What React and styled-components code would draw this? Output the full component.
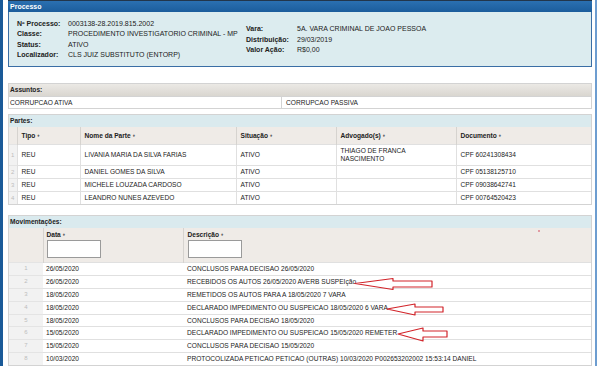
import React from "react";
import styled, { createGlobalStyle } from "styled-components";

const GlobalStyle = createGlobalStyle`
  html, body {
    margin: 0;
    padding: 0;
    background: #fff;
  }
  body {
    font-family: "Liberation Sans", Arial, sans-serif;
    font-size: 6.6px;
    color: #222;
  }
`;

const partes = [
  ["REU", "LIVANIA MARIA DA SILVA FARIAS", "ATIVO", "THIAGO DE FRANCA NASCIMENTO", "CPF 60241308434"],
  ["REU", "DANIEL GOMES DA SILVA", "ATIVO", "", "CPF 05138125710"],
  ["REU", "MICHELE LOUZADA CARDOSO", "ATIVO", "", "CPF 09038642741"],
  ["REU", "LEANDRO NUNES AZEVEDO", "ATIVO", "", "CPF 00764520423"],
];

const movimentacoes = [
  ["26/05/2020", "CONCLUSOS PARA DECISAO 26/05/2020"],
  ["26/05/2020", "RECEBIDOS OS AUTOS 26/05/2020 AVERB SUSPEIção"],
  ["18/05/2020", "REMETIDOS OS AUTOS PARA A 18/05/2020 7 VARA"],
  ["18/05/2020", "DECLARADO IMPEDIMENTO OU SUSPEICAO 18/05/2020 6 VARA"],
  ["18/05/2020", "CONCLUSOS PARA DECISAO 18/05/2020"],
  ["15/05/2020", "DECLARADO IMPEDIMENTO OU SUSPEICAO 15/05/2020 REMETER"],
  ["15/05/2020", "CONCLUSOS PARA DECISAO 15/05/2020"],
  ["10/03/2020", "PROTOCOLIZADA PETICAO PETICAO (OUTRAS) 10/03/2020 P002653202002 15:53:14 DANIEL"],
];

// annotation arrows drawn over the list (page coordinates)
const arrows = [
  "355,283.5 393,278.5 393,281 432,281 432,287 393,287 393,289.5",
  "387,309 415,304 415,307 443,307 443,312 415,312 415,315",
  "398,334 423,328 423,331 447,331 447,337 423,337 423,341",
];

const Page = styled.div`
  position: relative;
  width: 600px;
  height: 366px;
  overflow: hidden;
  display: flex;
  align-items: stretch;
`;

const LeftBar = styled.div`
  flex: none;
  width: 3px;
  background: #1a5a98;
`;

const RightBar = styled.div`
  flex: none;
  width: 2px;
  margin-left: 3px;
  background: #6d9dd0;
`;

const Main = styled.div`
  flex: none;
  width: 584px;
  margin-left: 5px;
  display: flex;
  flex-direction: column;
`;

const ProcTitle = styled.div`
  height: 11px;
  line-height: 11px;
  border-top: 1px solid #22364b;
  background: linear-gradient(#2b70b1, #1b5d9c);
  color: #fff;
  font-weight: bold;
  font-size: 7px;
  padding-left: 2px;
`;

const ProcBody = styled.div`
  height: 59px;
  border: 1px solid #3a6ea5;
  border-top: none;
  background: #dcecef;
  display: flex;
  align-items: center;
  font-size: 7px;
`;

const InfoGrid = styled.div`
  display: grid;
  grid-template-columns: 51px auto;
  grid-auto-rows: ${(p) => p.$row}px;
  align-items: center;
  padding-left: ${(p) => p.$pad}px;
  width: ${(p) => (p.$width ? p.$width + "px" : "auto")};
  box-sizing: border-box;
  white-space: nowrap;
`;

const Label = styled.span`
  font-weight: bold;
`;

const Section = styled.div`
  margin-top: ${(p) => p.$top}px;
  border: 1px solid #d3d3d3;
`;

const SectionTitle = styled.div`
  height: 12px;
  line-height: 12px;
  padding-left: 1px;
  font-weight: bold;
  background: ${(p) =>
    p.$gray ? "linear-gradient(#ebe9e5, #d9d6d0)" : "#daeaee"};
`;

const AssuntoRow = styled.div`
  display: grid;
  grid-template-columns: 272px 1fr;
  height: 11px;
  line-height: 11px;
  border-top: 1px solid #d3d3d3;
`;

const AssuntoCell = styled.div`
  padding-left: ${(p) => (p.$first ? 1 : 4)}px;
  border-left: ${(p) => (p.$first ? "none" : "1px solid #d3d3d3")};
`;

const Table = styled.table`
  width: 100%;
  border-collapse: collapse;
  table-layout: fixed;
`;

const Th = styled.th`
  text-align: left;
  font-weight: bold;
  background: #efebe7;
  border-left: 1px solid #d6d3cf;
  padding: 0 ${(p) => p.$px || 4}px;
  line-height: 17px;
  vertical-align: top;
  white-space: nowrap;
  &:first-child {
    border-left: none;
  }
`;

const FilterHead = styled.div`
  height: 34px;
  box-sizing: border-box;
  padding-top: 3px;
  line-height: 8px;
`;

const Sort = styled.span`
  font-size: 4.5px;
  line-height: 0;
  color: #666;
  margin-left: 2px;
  vertical-align: 1px;
`;

const Td = styled.td`
  padding: 0 ${(p) => p.$px || 4}px;
  line-height: ${(p) => p.$lh}px;
  border-top: 1px solid #e0e0e0;
  border-left: ${(p) => (p.$noDivider ? "none" : "1px solid #e0e0e0")};
  vertical-align: middle;
  white-space: nowrap;
  overflow: hidden;
`;

const Wrapped = styled.div`
  width: 86px;
  padding: 2px 0;
  line-height: 8px;
  white-space: normal;
`;

const NumTd = styled.td`
  background: #f2f2f2;
  color: #bdbdbd;
  text-align: center;
  border-top: 1px solid #e4e4e4;
  padding: 0;
  font-size: 6px;
  line-height: ${(p) => p.$lh}px;
`;

const FilterBox = styled.div`
  width: 54px;
  height: 18px;
  margin-top: 1px;
  box-sizing: border-box;
  border: 1px solid #9a9a9a;
  background: #fff;
`;

const Overlay = styled.svg`
  position: absolute;
  left: 0;
  top: 0;
  pointer-events: none;
`;

export default function App() {
  return (
    <>
      <GlobalStyle />
      <Page>
        <LeftBar />
        <Main>
          <ProcTitle>Processo</ProcTitle>
          <ProcBody>
            <InfoGrid $row={10.3} $pad={8} $width={237}>
              <Label>Nº Processo:</Label>
              <span>0003138-28.2019.815.2002</span>
              <Label>Classe:</Label>
              <span>PROCEDIMENTO INVESTIGATORIO CRIMINAL - MP</span>
              <Label>Status:</Label>
              <span>ATIVO</span>
              <Label>Localizador:</Label>
              <span>CLS JUIZ SUBSTITUTO (ENTORP)</span>
            </InfoGrid>
            <InfoGrid $row={10.8} $pad={0}>
              <Label>Vara:</Label>
              <span>5A. VARA CRIMINAL DE JOAO PESSOA</span>
              <Label>Distribuição:</Label>
              <span>29/03/2019</span>
              <Label>Valor Ação:</Label>
              <span>R$0,00</span>
            </InfoGrid>
          </ProcBody>

          <Section $top={16}>
            <SectionTitle $gray>Assuntos:</SectionTitle>
            <AssuntoRow>
              <AssuntoCell $first>CORRUPCAO ATIVA</AssuntoCell>
              <AssuntoCell>CORRUPCAO PASSIVA</AssuntoCell>
            </AssuntoRow>
          </Section>

          <Section $top={5}>
            <SectionTitle>Partes:</SectionTitle>
            <Table>
              <colgroup>
                <col style={{ width: 8 }} />
                <col style={{ width: 63 }} />
                <col style={{ width: 156 }} />
                <col style={{ width: 100 }} />
                <col style={{ width: 120 }} />
                <col />
              </colgroup>
              <thead>
                <tr>
                  <Th />
                  <Th>Tipo<Sort>♦</Sort></Th>
                  <Th>Nome da Parte<Sort>♦</Sort></Th>
                  <Th>Situação<Sort>♦</Sort></Th>
                  <Th>Advogado(s)<Sort>♦</Sort></Th>
                  <Th>Documento<Sort>♦</Sort></Th>
                </tr>
              </thead>
              <tbody>
                {partes.map(([tipo, nome, situacao, advogado, doc], i) => (
                  <tr key={i}>
                    <NumTd $lh={12}>{i + 1}</NumTd>
                    <Td $lh={12}>{tipo}</Td>
                    <Td $lh={12}>{nome}</Td>
                    <Td $lh={12}>{situacao}</Td>
                    <Td $lh={12}>
                      {advogado && <Wrapped>{advogado}</Wrapped>}
                    </Td>
                    <Td $lh={12}>{doc}</Td>
                  </tr>
                ))}
              </tbody>
            </Table>
          </Section>

          <Section $top={10}>
            <SectionTitle>Movimentações:</SectionTitle>
            <Table>
              <colgroup>
                <col style={{ width: 34 }} />
                <col style={{ width: 140 }} />
                <col />
              </colgroup>
              <thead>
                <tr>
                  <Th $px={3}>
                    <FilterHead />
                  </Th>
                  <Th $px={3}>
                    <FilterHead>
                      Data<Sort>♦</Sort>
                      <FilterBox />
                    </FilterHead>
                  </Th>
                  <Th>
                    <FilterHead>
                      Descrição<Sort>♦</Sort>
                      <FilterBox />
                    </FilterHead>
                  </Th>
                </tr>
              </thead>
              <tbody>
                {movimentacoes.map(([data, desc], i) => (
                  <tr key={i}>
                    <NumTd $lh={11.85}>{i + 1}</NumTd>
                    <Td $lh={11.85} $px={3} $noDivider>{data}</Td>
                    <Td $lh={11.85} $noDivider>{desc}</Td>
                  </tr>
                ))}
              </tbody>
            </Table>
          </Section>
        </Main>
        <RightBar />

        <Overlay width="600" height="366" viewBox="0 0 600 366">
          {arrows.map((pts, i) => (
            <polygon
              key={i}
              points={pts}
              fill="none"
              stroke="#d2242a"
              strokeWidth="1.2"
              strokeLinejoin="round"
            />
          ))}
          <circle cx="539" cy="231" r="0.7" fill="#c8102e" />
        </Overlay>
      </Page>
    </>
  );
}
